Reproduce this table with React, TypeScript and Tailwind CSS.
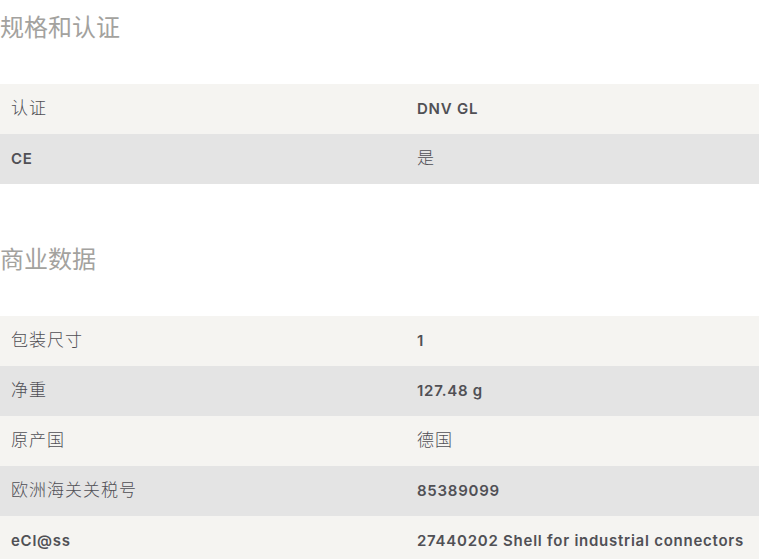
const sections: { title: string; rows: [string, string][] }[] = [
  {
    title: "规格和认证",
    rows: [
      ["认证", "DNV GL"],
      ["CE", "是"],
    ],
  },
  {
    title: "商业数据",
    rows: [
      ["包装尺寸", "1"],
      ["净重", "127.48 g"],
      ["原产国", "德国"],
      ["欧洲海关关税号", "85389099"],
      ["eCl@ss", "27440202 Shell for industrial connectors"],
    ],
  },
];

const isCjk = (s: string) => /[\u3400-\u9fff]/.test(s);

function Cell({ text }: { text: string }) {
  return isCjk(text) ? (
    <span className="text-[17px] tracking-[1px] font-light text-[#4f4e54]">{text}</span>
  ) : (
    <span className="font-['Inter'] text-[15px] tracking-[0.75px] font-semibold text-[#505055]">
      {text}
    </span>
  );
}

function SpecTable({ rows }: { rows: [string, string][] }) {
  return (
    <div>
      {rows.map(([label, value], i) => (
        <div
          key={label}
          className={`grid grid-cols-[406px_1fr] h-[50px] items-center px-[11px] ${
            i % 2 === 0 ? "bg-[#f5f4f1]" : "bg-[#e4e4e4]"
          }`}
        >
          <Cell text={label} />
          <Cell text={value} />
        </div>
      ))}
    </div>
  );
}

export default function App() {
  return (
    <div
      className="w-[759px] bg-white flex flex-col gap-12"
      style={{ fontFamily: '"Liberation Sans", "Noto Sans CJK SC", sans-serif' }}
    >
      {sections.map((s) => (
        <section key={s.title}>
          <h2 className="pt-[10px] pb-[38px] h-[84px] text-[24px] leading-[36px] text-[#a3a29e] font-normal">
            {s.title}
          </h2>
          <SpecTable rows={s.rows} />
        </section>
      ))}
    </div>
  );
}
